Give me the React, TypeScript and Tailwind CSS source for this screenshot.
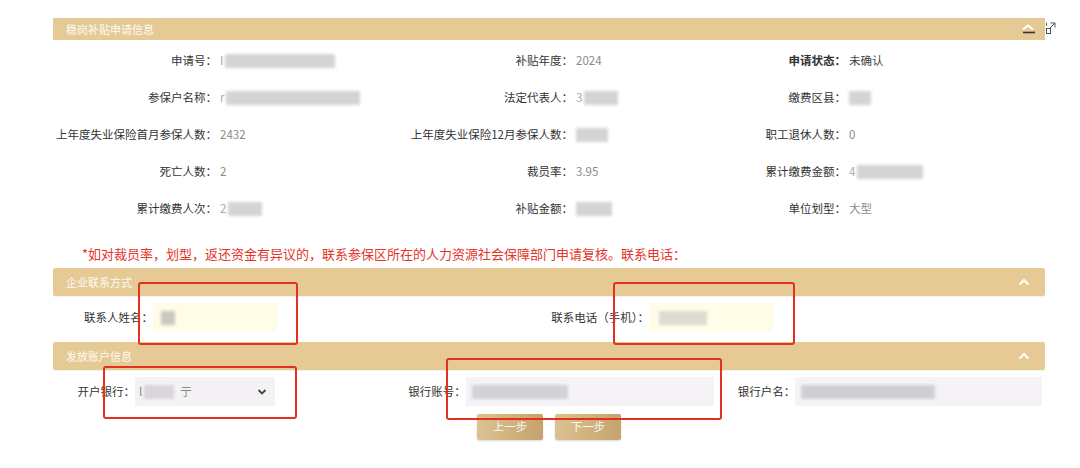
import React from 'react';

type Cell = { label: string; value?: string; blur?: number; prefix?: string; bold?: boolean; dark?: boolean };

const rows: Cell[][] = [
  [
    { label: '申请号：', prefix: 'I', blur: 110 },
    { label: '补贴年度：', value: '2024' },
    { label: '申请状态：', value: '未确认', bold: true, dark: true },
  ],
  [
    { label: '参保户名称：', prefix: 'r', blur: 134 },
    { label: '法定代表人：', prefix: '3', blur: 34 },
    { label: '缴费区县：', blur: 22 },
  ],
  [
    { label: '上年度失业保险首月参保人数：', value: '2432' },
    { label: '上年度失业保险12月参保人数：', blur: 32 },
    { label: '职工退休人数：', value: '0' },
  ],
  [
    { label: '死亡人数：', value: '2' },
    { label: '裁员率：', value: '3.95' },
    { label: '累计缴费金额：', prefix: '4', blur: 66 },
  ],
  [
    { label: '累计缴费人次：', prefix: '2', blur: 34 },
    { label: '补贴金额：', blur: 36 },
    { label: '单位划型：', value: '大型' },
  ],
];

function Blur({ w, tone = 'bg-[#d4d4d6]' }: { w: number; tone?: string }) {
  return <span className={`inline-block h-[14px] align-middle blur-[1.5px] ${tone}`} style={{ width: w }} />;
}

function Value({ cell }: { cell: Cell }) {
  return (
    <span className={`flex items-center gap-[2px] ${cell.dark ? 'text-[#444]' : 'text-[#8a8a8a]'}`}>
      {cell.prefix && <span className="text-[#aaa]">{cell.prefix}</span>}
      {cell.value}
      {cell.blur && <Blur w={cell.blur} />}
    </span>
  );
}

function Chevron({ className }: { className?: string }) {
  return (
    <svg width="12" height="8" viewBox="0 0 12 8" className={className}>
      <polyline points="1.5,6.5 6,2 10.5,6.5" fill="none" stroke="white" strokeWidth="2" />
    </svg>
  );
}

function Bar({ title }: { title: string }) {
  return (
    <div className="flex h-[28px] items-center justify-between rounded-[2px] bg-[#e5ca95] pl-[13px] pr-[15px] text-[11px] text-white/90 shadow-[0_1px_1px_rgba(0,0,0,0.06)]">
      <span>{title}</span>
      <Chevron />
    </div>
  );
}

function Field({ label, labelW, children }: { label: string; labelW: number; children: React.ReactNode }) {
  return (
    <div className="flex items-center">
      <span className="shrink-0 whitespace-nowrap text-right text-[#333]" style={{ width: labelW }}>
        {label}
      </span>
      {children}
    </div>
  );
}

export default function App() {
  return (
    <div className="relative h-[468px] w-[1080px] overflow-hidden bg-white font-['Noto_Sans_CJK_SC','Noto_Sans',sans-serif] text-[11.5px]">
      <div className="ml-[53px] w-[992px] pt-[18px]">
        <div className="flex h-[22px] items-center justify-between bg-[#e5ca95] pl-[13px] pr-[10px] text-[11px] text-white/90">
          <span>稳岗补贴申请信息</span>
          <svg width="14" height="10" viewBox="0 0 14 10">
            <polyline points="2,5.5 7,1.5 12,5.5" fill="none" stroke="white" strokeWidth="2" />
            <line x1="2" y1="8.5" x2="14" y2="8.5" stroke="#333" strokeWidth="1.6" />
          </svg>
        </div>

        <div className="mt-[2px] grid grid-cols-[164px_183px_173px_167px_106px_199px]">
          {rows.map((row, i) =>
            row.map((cell, j) => (
              <React.Fragment key={`${i}-${j}`}>
                <div
                  className={`flex h-[37px] items-center justify-end whitespace-nowrap text-[#333] ${cell.bold ? 'font-semibold' : ''}`}
                >
                  {cell.label}
                </div>
                <div className="flex h-[37px] items-center pl-[3px]">
                  <Value cell={cell} />
                </div>
              </React.Fragment>
            )),
          )}
        </div>

        <div className="mt-[13px] flex h-[28px] items-center pl-[29px] text-[13px] text-[#e4352a]">
          *如对裁员率，划型，返还资金有异议的，联系参保区所在的人力资源社会保障部门申请复核。联系电话：
        </div>

        <Bar title="企业联系方式" />
        <div className="flex h-[46px] items-start pt-[7px]">
          <div className="w-[493px]">
            <Field label="联系人姓名：" labelW={100}>
              <div className="flex h-[29px] w-[124px] items-center bg-[#fffce8] pl-[8px]">
                <Blur w={14} tone="bg-[#c9c9bf]" />
              </div>
            </Field>
          </div>
          <Field label="联系电话（手机）：" labelW={103}>
            <div className="flex h-[29px] w-[124px] items-center bg-[#fffce8] pl-[10px]">
              <Blur w={48} tone="bg-[#dcdcd2]" />
            </div>
          </Field>
        </div>

        <Bar title="发放账户信息" />
        <div className="grid grid-cols-3 pt-[7px]">
          <Field label="开户银行：" labelW={82}>
            <div className="flex h-[29px] w-[140px] items-center justify-between bg-[#f4f2f5] pl-[4px] pr-[8px] text-[#888]">
              <span className="flex items-center gap-[2px]">
                <span>l</span>
                <Blur w={30} tone="bg-[#d8d6da]" />
                <span className="ml-[4px]">亍</span>
              </span>
              <svg width="10" height="8" viewBox="0 0 10 8">
                <polyline points="1.5,2 5,5.5 8.5,2" fill="none" stroke="#444" strokeWidth="1.8" />
              </svg>
            </div>
          </Field>
          <Field label="银行账号：" labelW={82}>
            <div className="flex h-[29px] w-[248px] items-center bg-[#f5f3f6] pl-[6px]">
              <Blur w={96} tone="bg-[#d3d1d5]" />
            </div>
          </Field>
          <Field label="银行户名：" labelW={81}>
            <div className="flex h-[29px] w-[247px] items-center bg-[#f5f3f6] pl-[6px]">
              <Blur w={134} tone="bg-[#d0ced2]" />
            </div>
          </Field>
        </div>

        <div className="mt-[8px] flex gap-[12px] pl-[424px]">
          <button className="h-[26px] w-[66px] rounded-[2px] bg-gradient-to-r from-[#dcc291] to-[#c6a26d] text-[11.5px] text-white/90 shadow-[0_1px_2px_rgba(0,0,0,0.15)]">
            上一步
          </button>
          <button className="h-[26px] w-[66px] rounded-[2px] bg-gradient-to-r from-[#dcc291] to-[#c6a26d] text-[11.5px] text-white/90 shadow-[0_1px_2px_rgba(0,0,0,0.15)]">
            下一步
          </button>
        </div>
      </div>

      <svg width="10" height="12" viewBox="0 0 10 12" className="absolute left-[1046px] top-[22px]">
        <rect x="0.5" y="6.5" width="4" height="5" fill="none" stroke="#555" strokeWidth="1" />
        <polyline points="4.5,1 9,1 9,5.5" fill="none" stroke="#555" strokeWidth="1" />
        <line x1="9" y1="1" x2="4" y2="6" stroke="#555" strokeWidth="1" />
        <line x1="0.5" y1="4" x2="0.5" y2="0.5" stroke="#777" strokeWidth="1" />
      </svg>

      <div className="absolute left-[138px] top-[282px] h-[63px] w-[160px] rounded-[3px] border-2 border-[#e3301f]" />
      <div className="absolute left-[613px] top-[282px] h-[63px] w-[182px] rounded-[3px] border-2 border-[#e3301f]" />
      <div className="absolute left-[103px] top-[366px] h-[53px] w-[194px] rounded-[3px] border-2 border-[#e3301f]" />
      <div className="absolute left-[446px] top-[358px] h-[62px] w-[276px] rounded-[3px] border-2 border-[#e3301f]" />
    </div>
  );
}
